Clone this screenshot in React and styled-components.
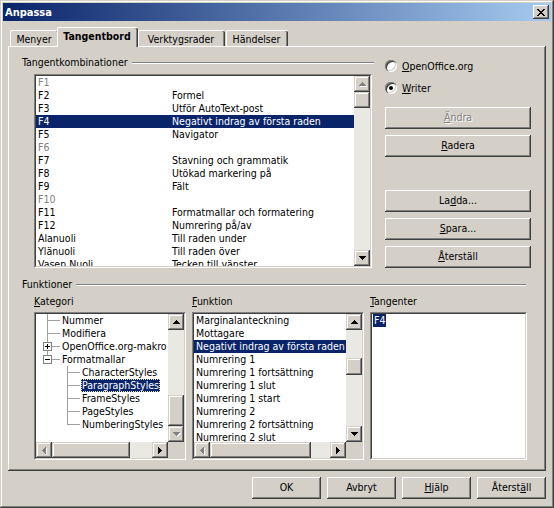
import React from "react";
import styled, { createGlobalStyle, css } from "styled-components";

const FACE = "#D4D0C8";
const SHADOW = "#808080";
const DARK = "#404040";
const NAVY = "#0A246A";
const TRACK = "#EAE8E3";
const TREELINE = "#A0A0A0";
const FONT = `"DejaVu Sans Condensed", "DejaVu Sans", Tahoma, "Liberation Sans", sans-serif`;

const GlobalStyle = createGlobalStyle`
  html, body { margin: 0; padding: 0; background: ${FACE}; }
  body {
    font-family: ${FONT};
    font-stretch: condensed;
    font-size: 10.5px;
    line-height: 13px;
    color: #000;
  }
  *, *::before, *::after { box-sizing: border-box; }
  u { text-decoration: underline; text-underline-offset: 1px; }
`;

const raisedButton = css`
  background: ${FACE};
  box-shadow: inset -1px -1px ${DARK}, inset 1px 1px #fff, inset -2px -2px ${SHADOW};
`;

const raisedScroll = css`
  background: ${FACE};
  box-shadow: inset -1px -1px ${DARK}, inset 1px 1px ${FACE}, inset -2px -2px ${SHADOW},
    inset 2px 2px #fff;
`;

/* ---------- window frame ---------- */

const Window = styled.div`
  width: 554px;
  height: 508px;
  padding: 3px;
  background: ${FACE};
  box-shadow: inset -1px -1px ${DARK}, inset 1px 1px ${FACE}, inset -2px -2px ${SHADOW},
    inset 2px 2px #fff;
  display: flex;
  flex-direction: column;
`;

const TitleBar = styled.div`
  height: 18px;
  flex: none;
  display: flex;
  align-items: center;
  justify-content: space-between;
  padding: 0 2px 0 2px;
  background: linear-gradient(to right, ${NAVY}, #a6caf0);
  color: #fff;
  font-weight: bold;
  font-size: 11px;
`;

const CloseButton = styled.div`
  width: 16px;
  height: 14px;
  display: flex;
  align-items: center;
  justify-content: center;
  ${raisedButton};
`;

const Body = styled.div`
  flex: 1;
  display: flex;
  flex-direction: column;
  padding: 6px 5px 0 5px;
`;

/* ---------- tabs ---------- */

const TabRow = styled.div`
  height: 19px;
  flex: none;
  display: flex;
  align-items: flex-end;
  padding-left: 2px;
  position: relative;
  z-index: 1;
`;

const Tab = styled.div`
  position: relative;
  width: ${(p) => p.$w}px;
  height: ${(p) => (p.$active ? 20 : 16)}px;
  margin-left: ${(p) => (p.$active ? -2 : p.$gap ? 1 : 0)}px;
  margin-bottom: ${(p) => (p.$active ? -1 : 0)}px;
  padding-top: 2px;
  padding-right: 2px;
  text-align: center;
  z-index: ${(p) => (p.$active ? 2 : 0)};
  background: ${FACE};
  border-top: 1px solid #fff;
  border-left: 1px solid #fff;
  border-radius: 2px 2px 0 0;
  box-shadow: inset -1px 0 ${DARK}, inset -2px 0 ${SHADOW};
  font-weight: ${(p) => (p.$active ? "bold" : "normal")};
  white-space: nowrap;
`;

const Panel = styled.div`
  height: 425px;
  flex: none;
  padding: 10px 20px 0 14px;
  box-shadow: inset -1px -1px ${DARK}, inset 1px 1px #fff, inset -2px -2px ${SHADOW};
  display: flex;
  flex-direction: column;
`;

/* ---------- groups ---------- */

const TopSection = styled.div`
  display: flex;
  align-items: flex-start;
`;

const Group = styled.div`
  width: ${(p) => p.$w}px;
  display: flex;
  flex-direction: column;
  flex: none;
`;

const GroupHeader = styled.div`
  height: 13px;
  display: flex;
  align-items: center;
  gap: 4px;
  white-space: nowrap;
  &::after {
    content: "";
    flex: 1;
    height: 2px;
    border-top: 1px solid ${SHADOW};
    border-bottom: 1px solid #fff;
  }
`;

const Indent = styled.div`
  padding-left: 12px;
  margin-top: ${(p) => p.$top}px;
`;

/* ---------- sunken fields / lists ---------- */

const Field = styled.div`
  width: ${(p) => p.$w}px;
  height: ${(p) => p.$h}px;
  flex: none;
  border: 1px solid;
  border-color: ${SHADOW} #fff #fff ${SHADOW};
`;

const FieldInner = styled.div`
  height: 100%;
  border: 1px solid;
  border-color: ${DARK} ${FACE} ${FACE} ${DARK};
  background: #fff;
  display: grid;
  grid-template-columns: minmax(0, 1fr) auto;
  grid-template-rows: minmax(0, 1fr) auto;
`;

const ListArea = styled.div`
  overflow: hidden;
  min-width: 0;
  background: #fff;
  padding-left: ${(p) => p.$pad || 0}px;
`;

const Row = styled.div`
  display: flex;
  height: 13px;
  line-height: 13px;
  white-space: nowrap;
  padding-left: 2px;
  color: ${(p) => (p.$selected ? "#fff" : p.$muted ? SHADOW : "#000")};
  background: ${(p) => (p.$selected ? NAVY : "transparent")};
`;

const KeyCell = styled.span`
  width: 134px;
  flex: none;
`;

const Selection = styled.span`
  background: ${NAVY};
  color: #fff;
  padding: 0 1px;
  margin-left: -1px;
`;

/* ---------- scrollbars ---------- */

const VScroll = styled.div`
  width: 16px;
  display: flex;
  flex-direction: column;
`;

const HScroll = styled.div`
  height: 16px;
  display: flex;
`;

const Corner = styled.div`
  width: 16px;
  height: 16px;
  background: ${FACE};
`;

const ScrollButton = styled.div`
  width: 16px;
  height: 16px;
  flex: none;
  display: flex;
  align-items: center;
  justify-content: center;
  padding: 1px 0 0 1px;
  ${raisedScroll};
`;

const Track = styled.div`
  flex: 1;
  display: flex;
  flex-direction: ${(p) => (p.$vertical ? "column" : "row")};
  background: ${TRACK};
`;

const Thumb = styled.div`
  flex: none;
  ${(p) =>
    p.$vertical
      ? css`
          margin-top: ${p.$offset}px;
          height: ${p.$size}px;
        `
      : css`
          margin-left: ${p.$offset}px;
          width: ${p.$size}px;
        `}
  ${raisedScroll};
`;

const ARROWS = {
  up: { w: 7, h: 4, d: "M3 0h1v1H3zM2 1h3v1H2zM1 2h5v1H1zM0 3h7v1H0z" },
  down: { w: 7, h: 4, d: "M0 0h7v1H0zM1 1h5v1H1zM2 2h3v1H2zM3 3h1v1H3z" },
  left: { w: 4, h: 7, d: "M3 0h1v7H3zM2 1h1v5H2zM1 2h1v3H1zM0 3h1v1H0z" },
  right: { w: 4, h: 7, d: "M0 0h1v7H0zM1 1h1v5H1zM2 2h1v3H2zM3 3h1v1H3z" },
};

function Arrow({ dir, disabled }) {
  const a = ARROWS[dir];
  return (
    <svg
      width={a.w + 1}
      height={a.h + 1}
      viewBox={`0 0 ${a.w + 1} ${a.h + 1}`}
      shapeRendering="crispEdges"
    >
      {disabled && <path d={a.d} fill="#fff" transform="translate(1 1)" />}
      <path d={a.d} fill={disabled ? SHADOW : "#000"} />
    </svg>
  );
}

function VScrollBar({ offset, size, upOff, downOff }) {
  return (
    <VScroll>
      <ScrollButton>
        <Arrow dir="up" disabled={upOff} />
      </ScrollButton>
      <Track $vertical>
        <Thumb $vertical $offset={offset} $size={size} />
      </Track>
      <ScrollButton>
        <Arrow dir="down" disabled={downOff} />
      </ScrollButton>
    </VScroll>
  );
}

function HScrollBar({ offset, size, leftOff, rightOff }) {
  return (
    <HScroll>
      <ScrollButton>
        <Arrow dir="left" disabled={leftOff} />
      </ScrollButton>
      <Track>
        <Thumb $offset={offset} $size={size} />
      </Track>
      <ScrollButton>
        <Arrow dir="right" disabled={rightOff} />
      </ScrollButton>
    </HScroll>
  );
}

/* ---------- right column ---------- */

const RightColumn = styled.div`
  width: 146px;
  margin-left: 11px;
  padding-top: 4px;
  display: flex;
  flex-direction: column;
  flex: none;
`;

const RadioGroup = styled.div`
  display: flex;
  flex-direction: column;
  gap: 10px;
  margin-bottom: 13px;
`;

const RadioRow = styled.div`
  display: flex;
  align-items: center;
  gap: 5px;
  height: 12px;
  white-space: nowrap;
`;

const RadioMark = styled.span`
  position: relative;
  width: 12px;
  height: 12px;
  flex: none;
  border-radius: 50%;
  background: #fff;
  box-shadow: inset 1px 1px 0 ${SHADOW}, inset 2px 2px 0 ${DARK}, inset -1px -1px 0 #fff,
    inset -2px -2px 0 ${FACE};
  &::after {
    content: "";
    display: ${(p) => (p.$checked ? "block" : "none")};
    position: absolute;
    left: 4px;
    top: 4px;
    width: 4px;
    height: 4px;
    border-radius: 50%;
    background: #000;
  }
`;

const ButtonStack = styled.div`
  display: flex;
  flex-direction: column;
  gap: 6px;
`;

const Spacer = styled.div`
  height: ${(p) => p.$h}px;
`;

const PushButton = styled.div`
  width: ${(p) => p.$w}px;
  height: 22px;
  flex: none;
  display: flex;
  align-items: center;
  justify-content: center;
  padding-bottom: 1px;
  white-space: nowrap;
  ${raisedButton};
  color: ${(p) => (p.$disabled ? SHADOW : "#000")};
  text-shadow: ${(p) => (p.$disabled ? "1px 1px 0 #fff" : "none")};
`;

/* ---------- functions section ---------- */

const FunctionsSection = styled.div`
  margin-top: 10px;
  display: flex;
  flex-direction: column;
  width: 504px;
`;

const Columns = styled.div`
  display: flex;
  gap: 6px;
  padding-left: 12px;
  margin-top: 4px;
`;

const Column = styled.div`
  display: flex;
  flex-direction: column;
  gap: 4px;
`;

const SubLabel = styled.div`
  height: 13px;
  white-space: nowrap;
`;

/* ---------- tree ---------- */

const TreeRow = styled.div`
  display: flex;
  height: 13px;
  line-height: 13px;
  white-space: nowrap;
`;

const Guide = styled.span`
  position: relative;
  flex: none;
  width: 20px;
  height: 13px;
  &::before {
    content: "";
    position: absolute;
    left: 10px;
    top: 0;
    width: 1px;
    height: ${(p) => (p.$kind === "last" ? "7px" : p.$kind === "none" ? "0" : "13px")};
    background: ${TREELINE};
  }
  &::after {
    content: "";
    position: absolute;
    left: 10px;
    top: 6px;
    height: 1px;
    width: ${(p) => (p.$kind === "tee" || p.$kind === "last" ? "13px" : "0")};
    background: ${TREELINE};
  }
`;

const Expander = styled.span`
  position: absolute;
  left: 6px;
  top: 2px;
  width: 9px;
  height: 9px;
  z-index: 1;
  border: 1px solid ${SHADOW};
  background: #fff;
  display: flex;
`;

const TreeLabel = styled.span`
  margin-left: 4px;
  padding: 0 1px;
  height: 13px;
  background: ${(p) => (p.$selected ? NAVY : "transparent")};
  color: ${(p) => (p.$selected ? "#fff" : "#000")};
  outline: ${(p) => (p.$selected ? "1px dotted #e8e0b0" : "none")};
  outline-offset: -1px;
`;

function ExpanderBox({ open }) {
  return (
    <Expander>
      <svg width="7" height="7" viewBox="0 0 7 7" shapeRendering="crispEdges">
        <path d="M1 3h5v1H1z" fill="#000" />
        {!open && <path d="M3 1h1v5H3z" fill="#000" />}
      </svg>
    </Expander>
  );
}

function TreeItem({ guides, expander, selected, children }) {
  return (
    <TreeRow>
      {guides.map((g, i) => (
        <Guide key={i} $kind={g}>
          {i === guides.length - 1 && expander && <ExpanderBox open={expander === "open"} />}
        </Guide>
      ))}
      <TreeLabel $selected={selected}>{children}</TreeLabel>
    </TreeRow>
  );
}

/* ---------- bottom bar ---------- */

const ButtonBar = styled.div`
  display: flex;
  justify-content: flex-end;
  gap: 6px;
  margin-top: 6px;
`;

/* ---------- data ---------- */

const SHORTCUTS = [
  ["F1", "", true],
  ["F2", "Formel"],
  ["F3", "Utför AutoText-post"],
  ["F4", "Negativt indrag av första raden", false, true],
  ["F5", "Navigator"],
  ["F6", "", true],
  ["F7", "Stavning och grammatik"],
  ["F8", "Utökad markering på"],
  ["F9", "Fält"],
  ["F10", "", true],
  ["F11", "Formatmallar och formatering"],
  ["F12", "Numrering på/av"],
  ["Alanuoli", "Till raden under"],
  ["Ylänuoli", "Till raden över"],
  ["Vasen Nuoli", "Tecken till vänster"],
];

const FUNCTIONS = [
  "Marginalanteckning",
  "Mottagare",
  "Negativt indrag av första raden",
  "Numrering 1",
  "Numrering 1 fortsättning",
  "Numrering 1 slut",
  "Numrering 1 start",
  "Numrering 2",
  "Numrering 2 fortsättning",
  "Numrering 2 slut",
];

const TREE = [
  { g: ["tee"], t: "Nummer" },
  { g: ["tee"], t: "Modifiera" },
  { g: ["tee"], t: "OpenOffice.org-makro", e: "closed" },
  { g: ["last"], t: "Formatmallar", e: "open" },
  { g: ["none", "tee"], t: "CharacterStyles" },
  { g: ["none", "tee"], t: "ParagraphStyles", s: true },
  { g: ["none", "tee"], t: "FrameStyles" },
  { g: ["none", "tee"], t: "PageStyles" },
  { g: ["none", "last"], t: "NumberingStyles" },
];

const TABS = [
  { t: "Menyer", w: 49 },
  { t: "Tangentbord", w: 81, active: true },
  { t: "Verktygsrader", w: 87 },
  { t: "Händelser", w: 62, gap: true },
];

export default function App() {
  return (
    <>
      <GlobalStyle />
      <Window>
        <TitleBar>
          <span>Anpassa</span>
          <CloseButton>
            <svg width="8" height="7" viewBox="0 0 8 7" shapeRendering="crispEdges">
              <path
                d="M0 0h2v1H0zM6 0h2v1H6zM1 1h2v1H1zM5 1h2v1H5zM2 2h4v1H2zM3 3h2v1H3zM2 4h4v1H2zM1 5h2v1H1zM5 5h2v1H5zM0 6h2v1H0zM6 6h2v1H6z"
                fill="#000"
              />
            </svg>
          </CloseButton>
        </TitleBar>

        <Body>
          <TabRow>
            {TABS.map((tab) => (
              <Tab key={tab.t} $w={tab.w} $active={tab.active} $gap={tab.gap}>
                {tab.t}
              </Tab>
            ))}
          </TabRow>

          <Panel>
            <TopSection>
              <Group $w={352}>
                <GroupHeader>Tangentkombinationer</GroupHeader>
                <Indent $top={5}>
                  <Field $w={338} $h={194}>
                    <FieldInner>
                      <ListArea>
                        {SHORTCUTS.map(([k, f, muted, sel]) => (
                          <Row key={k} $muted={muted} $selected={sel}>
                            <KeyCell>{k}</KeyCell>
                            <span>{f}</span>
                          </Row>
                        ))}
                      </ListArea>
                      <VScrollBar offset={0} size={16} upOff />
                    </FieldInner>
                  </Field>
                </Indent>
              </Group>

              <RightColumn>
                <RadioGroup>
                  <RadioRow>
                    <RadioMark />
                    <span>
                      <u>O</u>penOffice.org
                    </span>
                  </RadioRow>
                  <RadioRow>
                    <RadioMark $checked />
                    <span>
                      <u>W</u>riter
                    </span>
                  </RadioRow>
                </RadioGroup>
                <ButtonStack>
                  <PushButton $w={146} $disabled>
                    <span>
                      <u>Ä</u>ndra
                    </span>
                  </PushButton>
                  <PushButton $w={146}>
                    <span>
                      <u>R</u>adera
                    </span>
                  </PushButton>
                  <Spacer $h={21} />
                  <PushButton $w={146}>
                    <span>
                      La<u>d</u>da...
                    </span>
                  </PushButton>
                  <PushButton $w={146}>
                    <span>
                      <u>S</u>para...
                    </span>
                  </PushButton>
                  <PushButton $w={146}>
                    <span>
                      <u>Å</u>terställ
                    </span>
                  </PushButton>
                </ButtonStack>
              </RightColumn>
            </TopSection>

            <FunctionsSection>
              <GroupHeader>Funktioner</GroupHeader>
              <Columns>
                <Column>
                  <SubLabel>
                    <u>K</u>ategori
                  </SubLabel>
                  <Field $w={152} $h={148}>
                    <FieldInner>
                      <ListArea $pad={1}>
                        {TREE.map((n) => (
                          <TreeItem key={n.t} guides={n.g} expander={n.e} selected={n.s}>
                            {n.t}
                          </TreeItem>
                        ))}
                      </ListArea>
                      <VScrollBar offset={65} size={31} downOff />
                      <HScrollBar offset={0} size={78} leftOff />
                      <Corner />
                    </FieldInner>
                  </Field>
                </Column>

                <Column>
                  <SubLabel>
                    <u>F</u>unktion
                  </SubLabel>
                  <Field $w={172} $h={148}>
                    <FieldInner>
                      <ListArea>
                        {FUNCTIONS.map((f, i) => (
                          <Row key={f} $selected={i === 2}>
                            {f}
                          </Row>
                        ))}
                      </ListArea>
                      <VScrollBar offset={28} size={17} />
                      <HScrollBar offset={0} size={101} leftOff />
                      <Corner />
                    </FieldInner>
                  </Field>
                </Column>

                <Column>
                  <SubLabel>
                    <u>T</u>angenter
                  </SubLabel>
                  <Field $w={157} $h={148}>
                    <FieldInner>
                      <ListArea>
                        <Row>
                          <Selection>F4</Selection>
                        </Row>
                      </ListArea>
                    </FieldInner>
                  </Field>
                </Column>
              </Columns>
            </FunctionsSection>
          </Panel>

          <ButtonBar>
            <PushButton $w={69}>OK</PushButton>
            <PushButton $w={69}>Avbryt</PushButton>
            <PushButton $w={69}>
              <span>
                <u>H</u>jälp
              </span>
            </PushButton>
            <PushButton $w={69}>
              <span>
                Återst<u>ä</u>ll
              </span>
            </PushButton>
          </ButtonBar>
        </Body>
      </Window>
    </>
  );
}
